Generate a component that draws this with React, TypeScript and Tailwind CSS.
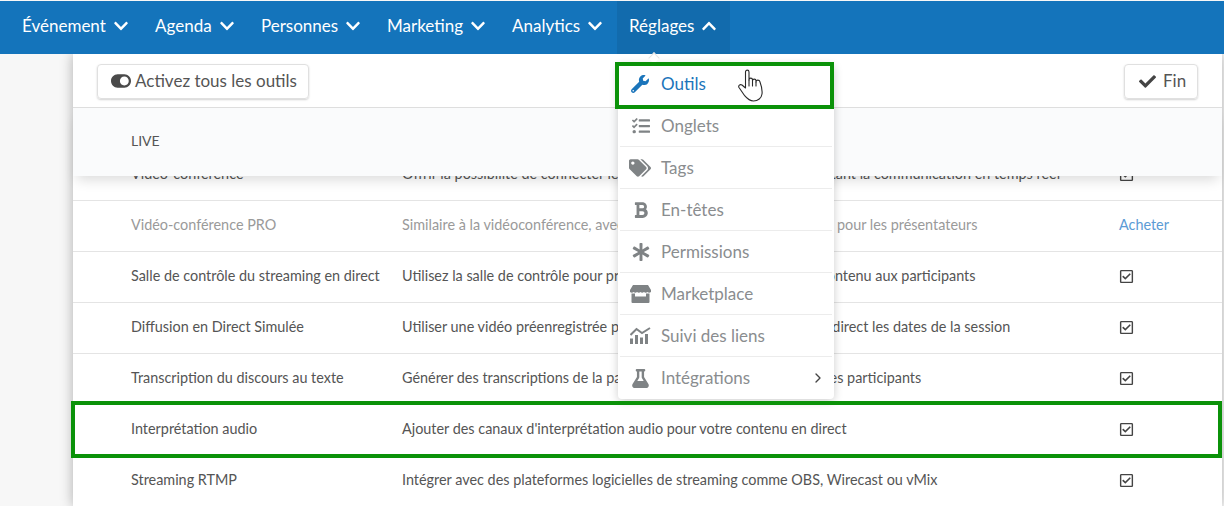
import { FaAsterisk, FaBold, FaCheck, FaChevronDown, FaChevronUp, FaFlask, FaRegCheckSquare, FaTags, FaTasks, FaToggleOn, FaWrench } from "react-icons/fa";
import { ChevronRight } from "lucide-react";

const nav = [
  { label: "Événement", w: "w-[133px]" },
  { label: "Agenda", w: "w-[106px]" },
  { label: "Personnes", w: "w-[126px]" },
  { label: "Marketing", w: "w-[125px]" },
  { label: "Analytics", w: "w-[118px]" },
];

const rows = [
  { name: "Vidéo-conférence", desc: "Offrir la possibilité de connecter les participants et les hôtes, permettant la communication en temps réel", action: "check" },
  { name: "Vidéo-conférence PRO", desc: "Similaire à la vidéoconférence, avec plus de fonctions et de contrôles pour les présentateurs", action: "buy", muted: true },
  { name: "Salle de contrôle du streaming en direct", desc: "Utilisez la salle de contrôle pour préparer et diffuser en ligne votre contenu aux participants", action: "check" },
  { name: "Diffusion en Direct Simulée", desc: "Utiliser une vidéo préenregistrée pour simuler une vraie diffusion en direct les dates de la session", action: "check" },
  { name: "Transcription du discours au texte", desc: "Générer des transcriptions de la parole au texte en temps réel pour les participants", action: "check" },
  { name: "Interprétation audio", desc: "Ajouter des canaux d'interprétation audio pour votre contenu en direct", action: "check" },
  { name: "Streaming RTMP", desc: "Intégrer avec des plateformes logicielles de streaming comme OBS, Wirecast ou vMix", action: "check" },
];

function LinkStats({ className }: { className?: string }) {
  return (
    <svg viewBox="0 0 21 17" className={className} fill="currentColor">
      <rect x="0" y="11.5" width="3" height="5.5" />
      <rect x="5" y="8" width="3" height="9" />
      <rect x="10" y="10.5" width="3" height="6.5" />
      <rect x="15" y="7" width="3" height="10" />
      <path d="M0.5 8 L6.5 2 L12 6 L20 1" fill="none" stroke="currentColor" strokeWidth="2" />
    </svg>
  );
}

function StoreIcon({ className }: { className?: string }) {
  return (
    <svg viewBox="0 0 21 18" className={className} fill="currentColor">
      <path d="M3 0 H18 L21 5 V7 Q19 8.5 17.5 7 Q15.5 8.5 14 7 Q12 8.5 10.5 7 Q9 8.5 7 7 Q5.5 8.5 3.5 7 Q2 8.5 0 7 V5 Z" />
      <path fillRule="evenodd" d="M1.5 8.5 H5 V11.5 H16 V8.5 H19.5 V17 Q19.5 18 18.5 18 H2.5 Q1.5 18 1.5 17 Z" />
    </svg>
  );
}

function HandCursor({ className }: { className?: string }) {
  return (
    <svg viewBox="0 0 25 33" className={className} fill="#fff" stroke="#2a2a2a" strokeWidth="1.1" strokeLinejoin="round" strokeLinecap="round">
      <path d="M7.5 19 V3 C7.5 .5 11 .5 11 3 V11 C11 8.5 14.5 8.5 14.5 11 V12 C14.5 9.5 18 9.5 18 12 V13 C18 10.5 21.5 10.5 22 13 C23.5 17 24.5 21 24 25 C23.5 29 20 32 15.5 32 C11 32 9 29.5 6.5 26.5 L1 18.5 C0 16.5 2 15 4 16 Z" />
      <path d="M11 11 V17 M14.5 12 V17 M18 13 V17" fill="none" />
    </svg>
  );
}

const menu = [
  { label: "Onglets", icon: <FaTasks className="text-[18px]" /> },
  { label: "Tags", icon: <FaTags className="text-[22px]" />, shift: true },
  { label: "En-têtes", icon: <FaBold className="text-[18px]" /> },
  { label: "Permissions", icon: <FaAsterisk className="text-[18px]" /> },
  { label: "Marketplace", icon: <StoreIcon className="w-[21px] h-[18px]" /> },
  { label: "Suivi des liens", icon: <LinkStats className="w-[21px] h-[17px]" /> },
  { label: "Intégrations", icon: <FaFlask className="text-[19px]" />, more: true },
];

export default function App() {
  return (
    <div className="relative w-[1224px] h-[506px] overflow-hidden bg-[#f7f7f7] font-['Lato','Liberation_Sans',sans-serif]">
      <header className="relative z-20 mt-px h-[53px] bg-[#1474bb] flex items-center pl-[9px] text-white text-[17px]">
        {nav.map((n) => (
          <div key={n.label} className={`${n.w} h-full flex items-center pl-[13px] pb-[3px] gap-[7px]`}>
            <span>{n.label}</span>
            <FaChevronDown className="text-[16px]" />
          </div>
        ))}
        <div className="w-[113px] h-full flex items-center pl-[12px] pb-[3px] gap-[7px] bg-[#126bad]">
          <span>Réglages</span>
          <FaChevronUp className="text-[16px]" />
        </div>
      </header>

      <main className="relative ml-[73px] mr-[2px] h-[452px] bg-white shadow-[0_0_12px_rgba(0,0,0,0.3)]">
        <div className="h-[54px] flex items-center justify-between pt-[2px] pl-[24px] pr-[24px] border-b border-[#dedede] bg-white relative z-10">
          <button className="h-[35px] w-[212px] pb-px rounded border border-[#e0e0e0] shadow-[0_1px_2px_rgba(0,0,0,0.18)] flex items-center pl-[13px] gap-[4px] text-[17px] text-[#555]">
            <FaToggleOn className="text-[20px] text-[#4a4a4a]" />
            Activez tous les outils
          </button>
          <button className="h-[35px] w-[74px] pb-px rounded border border-[#e0e0e0] shadow-[0_1px_2px_rgba(0,0,0,0.18)] flex items-center pl-[14px] gap-[7px] text-[17px] text-[#555]">
            <FaCheck className="text-[17px] text-[#444]" />
            Fin
          </button>
        </div>
        <div className="relative z-[5] h-[68px] pb-[4px] bg-[#fafbfc] flex items-center pl-[58px] text-[14px] text-[#555] shadow-[0_8px_12px_-4px_rgba(0,0,0,0.14)]">
          LIVE
        </div>
        <div className="-mt-[26px]">
          {rows.map((r) => (
            <div
              key={r.name}
              className={`h-[51px] pb-[2px] flex items-center border-b border-[#e4e4e4] text-[14.4px] ${r.muted ? "text-[#9a9a9a]" : "text-[#555]"}`}
            >
              <div className="w-[329px] pl-[58px] whitespace-nowrap">{r.name}</div>
              <div className="w-[717px] whitespace-nowrap">{r.desc}</div>
              {r.action === "buy" ? (
                <span className="text-[#5b9bd5]">Acheter</span>
              ) : (
                <FaRegCheckSquare className="text-[15px] text-[#444]" />
              )}
            </div>
          ))}
        </div>
      </main>

      {/* dropdown menu */}
      <div className="absolute z-30 left-[618px] top-[64px] w-[216px] h-[335px] rounded bg-white shadow-[0_2px_10px_rgba(0,0,0,0.2)] flex flex-col">
        <div className="h-[42px] flex items-center pb-[2px] text-[#1b75bb] text-[17px]">
          <div className="w-[43px] flex justify-center">
            <FaWrench className="text-[18px]" />
          </div>
          Outils
        </div>
        {menu.map((m, i) => (
          <div
            key={m.label}
            className={`h-[42px] mx-[2px] shrink-0 flex items-center text-[#8a8d8f] text-[17px] ${i < menu.length - 1 ? "border-b border-[#ececec]" : ""}`}
          >
            <div className={`${m.shift ? "w-[39px]" : "w-[41px]"} flex justify-center text-[#7f8385]`}>{m.icon}</div>
            <span className={m.shift ? "ml-[2px]" : ""}>{m.label}</span>
            {m.more && <ChevronRight className="ml-auto mr-[6px] w-[16px] h-[16px] text-[#444]" strokeWidth={2} />}
          </div>
        ))}
      </div>
      <div className="absolute z-30 left-[650px] top-[54px] w-[8px] h-[8px] rotate-45 bg-white border-l border-t border-[#e4e4e4]" />

      {/* annotations */}
      <div className="absolute z-40 left-[615px] top-[62px] w-[219px] h-[47px] border-4 border-[#0b9209]" />
      <div className="absolute z-40 left-[71px] top-[401px] w-[1151px] h-[57px] border-4 border-[#0b9209]" />
      <HandCursor className="absolute z-50 left-[738px] top-[69px] w-[25px] h-[33px]" />
    </div>
  );
}
